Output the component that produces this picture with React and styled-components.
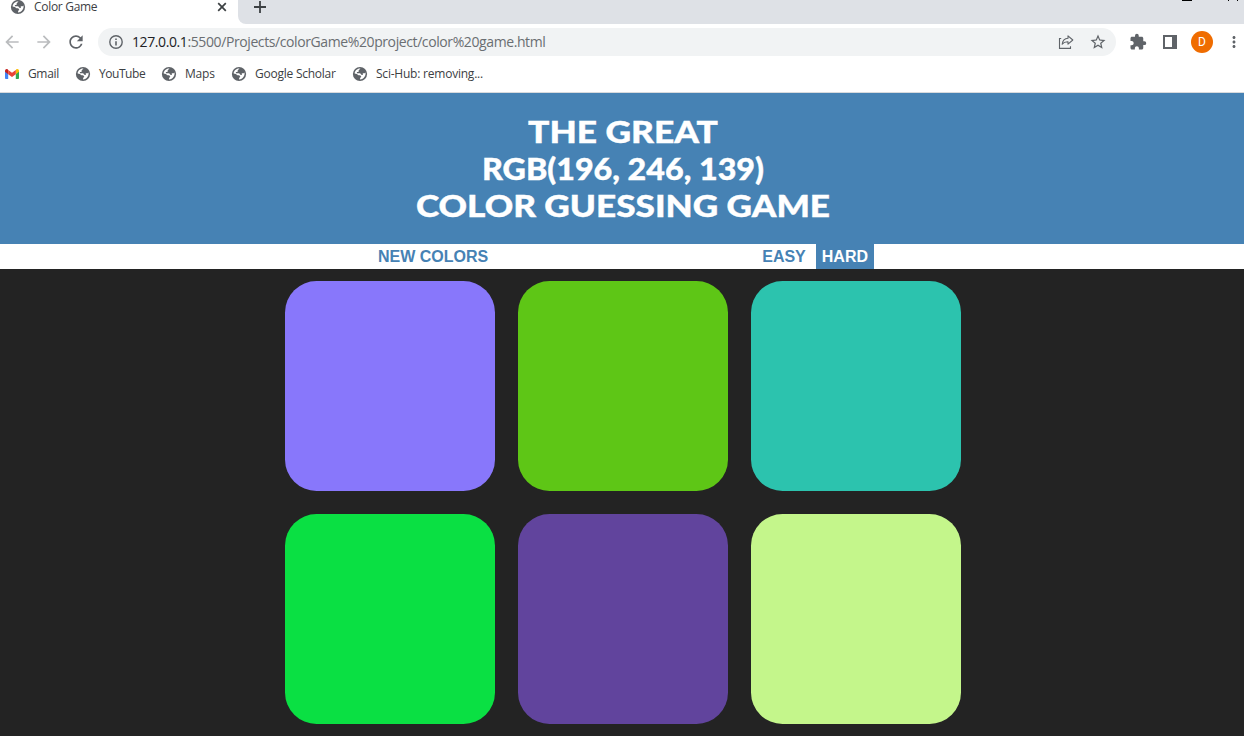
import React from 'react';
import styled, { createGlobalStyle } from 'styled-components';
import {
  MdArrowBack, MdArrowForward, MdRefresh, MdStarBorder, MdExtension, MdMoreVert,
} from 'react-icons/md';

const GlobalStyle = createGlobalStyle`
  * { box-sizing: border-box; }
  body { margin: 0; background: #232323; overflow: hidden; }
  button { border: 0; margin: 0; background: none; font: inherit; }
  svg { display: block; flex: none; }
`;

const Window = styled.div`
  height: 736px;
  display: flex;
  flex-direction: column;
  font-family: "Open Sans", "Noto Sans", sans-serif;
  background: #232323;
  overflow: hidden;
`;

const TabStrip = styled.div`
  height: 24px;
  flex: none;
  display: flex;
  justify-content: space-between;
  background: #fff;
`;

const Tab = styled.div`
  width: 238px;
  height: 14px;
  display: flex;
  align-items: center;
  padding: 0 11px 0 10px;
  color: #3c4043;
`;

const TabTitle = styled.span`
  flex: 1;
  margin-left: 8px;
  font-size: 12px;
  line-height: 16px;
  letter-spacing: -0.3px;
`;

const StripRest = styled.div`
  flex: 1;
  height: 24px;
  display: flex;
  justify-content: space-between;
  padding-left: 15px;
  background: #dee1e6;
  border-bottom-left-radius: 8px;
  color: #3c4043;
`;

const WindowControls = styled.div`
  display: flex;
  align-items: flex-start;
  gap: 36px;
  padding-right: 6px;
`;

const ControlStroke = styled.i`
  width: 10px;
  height: 1px;
  background: #000;
`;

const ControlCorners = styled.i`
  width: 10px;
  height: 1px;
  border: solid #000;
  border-width: 0 1px;
`;

const Toolbar = styled.div`
  height: 36px;
  flex: none;
  display: flex;
  align-items: center;
  padding-left: 2px;
  background: #fff;
  color: #5f6368;
`;

const NavIcons = styled.div`
  display: flex;
  gap: 12px;
  width: 96px;
  color: #babcbe;
  svg:last-child { color: #5f6368; }
`;

const AddressBar = styled.div`
  width: 1018px;
  height: 28px;
  display: flex;
  align-items: center;
  padding: 0 9px 0 10px;
  border-radius: 14px;
  background: #f1f3f4;
`;

const AddressActions = styled.div`
  display: flex;
  gap: 15px;
`;

const Url = styled.span`
  flex: 1;
  margin-left: 8px;
  font-size: 14px;
  line-height: 20px;
  letter-spacing: -0.4px;
  white-space: nowrap;
  color: #6a6e72;
`;

const Host = styled.span`
  color: #202124;
`;

const Actions = styled.div`
  flex: 1;
  display: flex;
  align-items: center;
  gap: 14px;
  padding-left: 13px;
`;

const PanelButton = styled.span`
  padding-left: 2px;
`;

const Avatar = styled.span`
  width: 22px;
  height: 22px;
  margin-right: -2px;
  border-radius: 50%;
  background: #ef6c00;
  color: #fff;
  font: 12px/22px Roboto, sans-serif;
  text-align: center;
`;

const Bookmarks = styled.div`
  height: 33px;
  flex: none;
  display: flex;
  align-items: flex-start;
  padding: 6px 0 0 4px;
  background: #fff;
  border-bottom: 1px solid #d8dadd;
`;

const Bookmark = styled.div`
  width: ${(p) => p.$width}px;
  height: 16px;
  display: flex;
  align-items: center;
  gap: 8px;
  font-size: 12px;
  line-height: 16px;
  letter-spacing: ${(p) => p.$spacing}px;
  white-space: nowrap;
  color: #3c4043;
`;

const Header = styled.h1`
  height: 151px;
  flex: none;
  margin: 0;
  padding: 20px 0 0 2px;
  background: #4682b4;
  color: #fff;
  font: 900 31px/37px Lato, sans-serif;
  -webkit-text-stroke: 0.4px #fff;
  text-align: center;
  text-transform: uppercase;
`;

const TitleLine = styled.span`
  display: block;
  transform: scaleX(${(p) => p.$stretch});
`;

const Controls = styled.div`
  height: 25px;
  flex: none;
  display: flex;
  padding-left: 372px;
  background: #fff;
`;

const GameButton = styled.button`
  height: 25px;
  margin-right: ${(p) => p.$after || 0}px;
  padding: 0 6px;
  background: ${(p) => (p.$selected ? '#4682b4' : '#fff')};
  color: ${(p) => (p.$selected ? '#fff' : '#4682b4')};
  font: bold 16px/25px "Liberation Sans", Arial, sans-serif;
  white-space: nowrap;
`;

const Board = styled.main`
  display: grid;
  grid-template-columns: repeat(3, 210px);
  grid-auto-rows: 210px;
  gap: 23px;
  padding: 12px 0 0 285px;
`;

const Square = styled.div`
  border-radius: 31.5px;
  background: ${(p) => p.$color};
`;

const Globe = () => (
  <svg width="16" height="16" viewBox="0 0 16 16">
    <circle cx="8" cy="8" r="7.1" fill="#5f6368" />
    <path fill="#fff" d="M8.6 2.5 6.6 4.4v1.5H4.9v1.4h3.2l1.6 1.6h1.1v-1.6h1.8l.9-.8c.5 3.2-1.6 6.6-5.4 6.9v-1.5l1.2-1.1-1.1-1.5H6.5L4.8 7.9l-2.2-.4C2.8 4.9 5.2 2.2 8.6 2.5Z" />
    <path fill="#5f6368" d="m8.7 2.4 1.5.6-.3 1.5-1.8 1.3-1.2-.2.1-1.2ZM2.3 7.4 5.4 10.8l1.1.2v2.8C4 13.5 1.9 10.5 2.3 7.4Z" />
  </svg>
);

const Gmail = () => (
  <svg width="16" height="16" viewBox="0 0 16 16">
    <path fill="#4285f4" d="M1 5v7.2c0 .5.4.8.8.8h2.4V7.2Z" />
    <path fill="#34a853" d="M15 5v7.2c0 .5-.4.8-.8.8h-2.4V7.2Z" />
    <path fill="#c5221f" d="M1 5c0-1.9 1.7-2.5 2.8-1.5l.4.4v4.3L1 5.8Z" />
    <path fill="#fbbc04" d="M15 5c0-1.9-1.7-2.5-2.8-1.5l-.4.4v4.3L15 5.8Z" />
    <path fill="#ea4335" d="M4.2 3.9 8 6.8l3.8-2.9v4.3L8 11 4.2 8.2Z" />
  </svg>
);

const Close = () => (
  <svg width="10" height="10" viewBox="0 0 10 10" stroke="#3c4043" strokeWidth="1.7">
    <path d="m1.2 1.2 7.6 7.6M8.8 1.2 1.2 8.8" />
  </svg>
);

const Plus = () => (
  <svg width="14" height="14" viewBox="0 0 14 14" stroke="#3c4043" strokeWidth="1.8">
    <path d="M7 1v12M1 7h12" />
  </svg>
);

const Info = () => (
  <svg width="16" height="16" viewBox="0 0 16 16">
    <circle cx="8" cy="8" r="6.2" fill="none" stroke="#5f6368" strokeWidth="1.4" />
    <path fill="#5f6368" d="M7.2 4.5h1.6V6H7.2zM7.2 7.2h1.6v4.3H7.2z" />
  </svg>
);

const Share = () => (
  <svg width="16" height="18" viewBox="0 -1 16 18" fill="none" stroke="#5f6368" strokeWidth="1.1">
    <path d="M3.2 4.5H1.5v9.9h11v-2.2" />
    <path strokeLinejoin="round" d="M10 1.8 14.8 6 10 10.2V7.8c-2.8-.1-4.6.7-5.8 2.4C4.6 6.8 6.6 4.6 10 4.3Z" />
  </svg>
);

const SidePanel = () => (
  <svg width="14" height="14" viewBox="0 0 14 14">
    <path fill="#5f6368" fillRule="evenodd" d="M0 0h14v14H0ZM2 2v10h7V2Z" />
  </svg>
);

const bookmarks = [
  { label: 'Gmail', width: 71, spacing: -0.35, Icon: Gmail },
  { label: 'YouTube', width: 86, spacing: -0.45, Icon: Globe },
  { label: 'Maps', width: 70, spacing: -0.2, Icon: Globe },
  { label: 'Google Scholar', width: 121, spacing: -0.24, Icon: Globe },
  { label: 'Sci-Hub: removing...', width: 150, spacing: -0.22, Icon: Globe },
];

const colors = ['#8877fb', '#5ec616', '#2cc3ae', '#0ae043', '#61449d', '#c4f68b'];

export default function App() {
  return (
    <Window>
      <GlobalStyle />
      <TabStrip>
        <Tab>
          <Globe />
          <TabTitle>Color Game</TabTitle>
          <Close />
        </Tab>
        <StripRest>
          <Plus />
          <WindowControls>
            <ControlStroke />
            <ControlCorners />
          </WindowControls>
        </StripRest>
      </TabStrip>
      <Toolbar>
        <NavIcons>
          <MdArrowBack size={20} />
          <MdArrowForward size={20} />
          <MdRefresh size={20} />
        </NavIcons>
        <AddressBar>
          <Info />
          <Url><Host>127.0.0.1</Host>:5500/Projects/colorGame%20project/color%20game.html</Url>
          <AddressActions>
            <Share />
            <MdStarBorder size={18} />
          </AddressActions>
        </AddressBar>
        <Actions>
          <MdExtension size={18} />
          <PanelButton><SidePanel /></PanelButton>
          <Avatar>D</Avatar>
          <MdMoreVert size={18} />
        </Actions>
      </Toolbar>
      <Bookmarks>
        {bookmarks.map(({ label, width, spacing, Icon }) => (
          <Bookmark key={label} $width={width} $spacing={spacing}><Icon />{label}</Bookmark>
        ))}
      </Bookmarks>
      <Header>
        <TitleLine $stretch={1.14}>The Great</TitleLine>
        <TitleLine $stretch={1.04}>RGB(196, 246, 139)</TitleLine>
        <TitleLine $stretch={1.134}>Color Guessing Game</TitleLine>
      </Header>
      <Controls>
        <GameButton $after={262}>NEW COLORS</GameButton>
        <GameButton $after={4}>EASY</GameButton>
        <GameButton $selected>HARD</GameButton>
      </Controls>
      <Board>
        {colors.map((c) => <Square key={c} $color={c} />)}
      </Board>
    </Window>
  );
}
